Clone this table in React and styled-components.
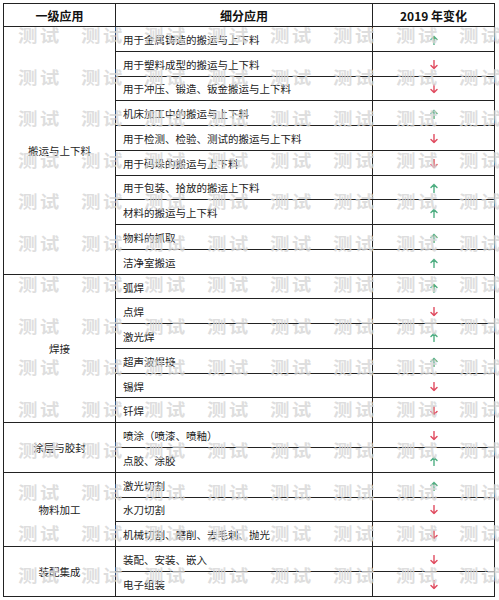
import styled, { createGlobalStyle } from "styled-components";

const GlobalStyle = createGlobalStyle`
  html, body {
    margin: 0;
    padding: 0;
    background: #fff;
  }
  body {
    font-family: "Noto Sans CJK SC", "Noto Sans", sans-serif;
    color: #2a2a2a;
  }
`;

const groups = [
  {
    name: "搬运与上下料",
    items: [
      ["用于金属铸造的搬运与上下料", "up"],
      ["用于塑料成型的搬运与上下料", "down"],
      ["用于冲压、锻造、钣金搬运与上下料", "down"],
      ["机床加工中的搬运与上下料", "up"],
      ["用于检测、检验、测试的搬运与上下料", "down"],
      ["用于码垛的搬运与上下料", "down"],
      ["用于包装、拾放的搬运上下料", "up"],
      ["材料的搬运与上下料", "up"],
      ["物料的抓取", "up"],
      ["洁净室搬运", "up"],
    ],
  },
  {
    name: "焊接",
    items: [
      ["弧焊", "up"],
      ["点焊", "down"],
      ["激光焊", "up"],
      ["超声波焊接", "up"],
      ["锡焊", "down"],
      ["钎焊", "down"],
    ],
  },
  {
    name: "涂层与胶封",
    items: [
      ["喷涂（喷漆、喷釉）", "down"],
      ["点胶、涂胶", "up"],
    ],
  },
  {
    name: "物料加工",
    items: [
      ["激光切割", "up"],
      ["水刀切割", "down"],
      ["机械切割、磨削、去毛刺、抛光", "down"],
    ],
  },
  {
    name: "装配集成",
    items: [
      ["装配、安装、嵌入", "down"],
      ["电子组装", "down"],
    ],
  },
];

const Page = styled.div`
  position: relative;
  padding: 3px 0 0 3px;
  width: 499px;
  height: 600px;
  box-sizing: border-box;
  overflow: hidden;
`;

const Table = styled.div`
  display: grid;
  width: 492px;
  grid-template-columns: 112px 257px 122px;
  grid-template-rows: 23px repeat(23, 24.78px);
  border-left: 1px solid #222;
  border-top: 1px solid #222;
  box-sizing: border-box;
`;

const Cell = styled.div`
  grid-column: ${(p) => p.$col};
  ${(p) => (p.$span ? `grid-row: span ${p.$span};` : "")}
  border-right: 1px solid #222;
  border-bottom: 1px solid #222;
  display: flex;
  align-items: center;
  box-sizing: border-box;
  min-width: 0;
`;

const HeadCell = styled(Cell)`
  justify-content: center;
  font-size: 12px;
  font-weight: 700;
  color: #111;
`;

const GroupCell = styled(Cell)`
  justify-content: center;
  font-size: 10.5px;
  color: #222;
`;

const NameCell = styled(Cell)`
  padding: 1px 0 0 7px;
  font-size: 10.5px;
  white-space: nowrap;
  color: #222;
`;

const TrendCell = styled(Cell)`
  justify-content: center;
  padding-top: 2px;
  padding-left: 1px;
`;

const Watermarks = styled.div`
  position: absolute;
  left: 18px;
  top: 14px;
  display: grid;
  grid-template-columns: repeat(8, 63px);
  grid-auto-rows: 41.5px;
  pointer-events: none;
`;

const Mark = styled.span`
  display: flex;
  align-items: center;
  font-size: 17px;
  font-weight: 700;
  letter-spacing: 2px;
  color: rgba(214, 214, 214, 0.78);
  transform: scaleX(1.15);
  transform-origin: left center;
  white-space: nowrap;
`;

function Arrow({ dir }) {
  const color = dir === "up" ? "#4fae82" : "#e04c60";
  const d =
    dir === "up"
      ? "M4 9.5 V1.5 M1 4.6 L4 1.5 L7 4.6"
      : "M4 0.5 V8.5 M1 5.4 L4 8.5 L7 5.4";
  return (
    <svg width="8" height="10" viewBox="0 0 8 10">
      <path d={d} stroke={color} strokeWidth="1.4" fill="none" strokeLinecap="round" strokeLinejoin="round" />
    </svg>
  );
}

export default function App() {
  return (
    <>
      <GlobalStyle />
      <Page>
        <Table>
          <HeadCell $col={1}>一级应用</HeadCell>
          <HeadCell $col={2}>细分应用</HeadCell>
          <HeadCell $col={3}>2019 年变化</HeadCell>
          {groups.map((g) => [
            <GroupCell key={g.name} $col={1} $span={g.items.length}>
              {g.name}
            </GroupCell>,
            ...g.items.map(([label, dir]) => [
              <NameCell key={label} $col={2}>
                {label}
              </NameCell>,
              <TrendCell key={label + "-t"} $col={3}>
                <Arrow dir={dir} />
              </TrendCell>,
            ]),
          ])}
        </Table>
        <Watermarks>
          {Array.from({ length: 8 * 14 }, (_, i) => (
            <Mark key={i}>测试</Mark>
          ))}
        </Watermarks>
      </Page>
    </>
  );
}
